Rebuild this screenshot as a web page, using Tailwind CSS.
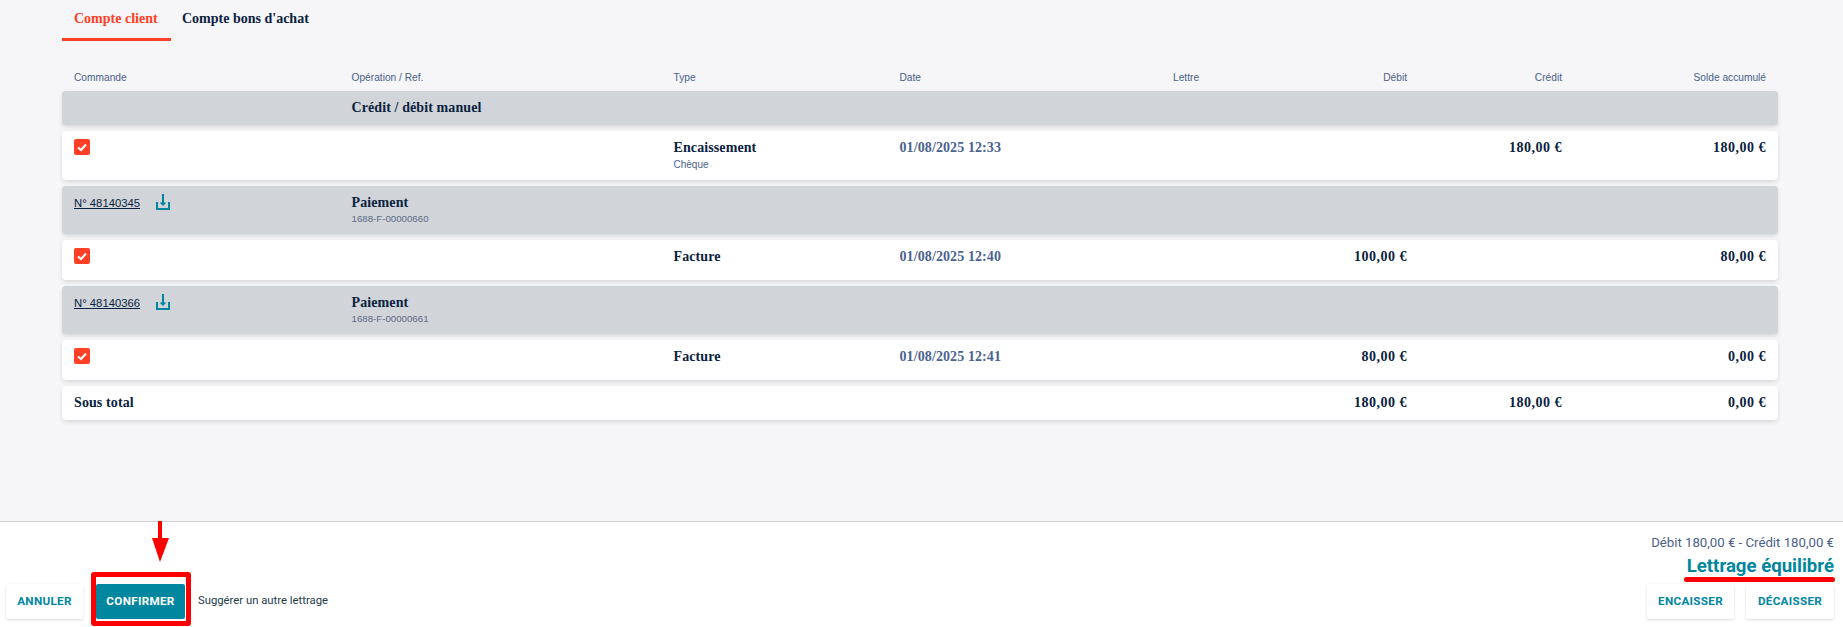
<!DOCTYPE html>
<html lang="fr">
<head>
    <meta charset="UTF-8">
    <title>Lettrage</title>
    <script src="https://cdn.jsdelivr.net/npm/@tailwindcss/browser@4"></script>
</head>
<body class="relative h-[627px] w-[1843px] overflow-hidden bg-[#f6f5f8] font-['Roboto',sans-serif] text-[#0a2240]">
    <div class="flex h-[627px] flex-col">
        <main class="flex-1 pr-[65px] pl-[62px]">
            <!-- onglets -->
            <nav class="flex h-[41px] font-['Liberation_Serif',serif] text-[14px] font-bold">
                <div class="h-[41px] w-[109px] border-b-[3px] border-[#ff4026] pt-[8px] pl-[12px] text-[#ff4026]">Compte client</div>
                <div class="pt-[8px] pl-[11px]">Compte bons d'achat</div>
            </nav>

            <!-- entetes -->
            <div class="grid h-[50px] grid-cols-[277.5px_322px_226px_273.5px_117px_117px_155px_204px] items-end px-[12px] pb-[6px] font-['Liberation_Sans',sans-serif] text-[10.2px] leading-[14px] text-[#4a5f8a]">
                <div>Commande</div>
                <div>Opération / Ref.</div>
                <div>Type</div>
                <div>Date</div>
                <div>Lettre</div>
                <div class="text-right">Débit</div>
                <div class="text-right">Crédit</div>
                <div class="text-right">Solde accumulé</div>
            </div>

            <div class="flex flex-col gap-[6px] font-['Liberation_Serif',serif] text-[14px] font-bold leading-[18px] tracking-[0.1px]">
                <!-- credit / debit manuel -->
                <div class="grid h-[34px] grid-cols-[277.5px_322px_226px_273.5px_117px_117px_155px_204px] items-center rounded-[4px] bg-[#d1d5d9] px-[12px] shadow-[0_2px_4px_rgba(0,0,0,0.12)]">
                    <div></div>
                    <div class="col-span-7">Crédit / débit manuel</div>
                </div>
                <div class="grid h-[49px] grid-cols-[277.5px_322px_226px_273.5px_117px_117px_155px_204px] rounded-[4px] bg-white px-[12px] pt-[8px] shadow-[0_2px_4px_rgba(0,0,0,0.12)]">
                    <div>
                        <div class="flex h-[16px] w-[16px] items-center justify-center rounded-[2px] bg-[#ff4026]">
                            <svg width="12" height="12" viewBox="0 0 12 12" fill="none" stroke="white" stroke-width="2"><path d="M2 6.5 L5 9 L10 3.5"/></svg>
                        </div>
                    </div>
                    <div></div>
                    <div>
                        <div>Encaissement</div>
                        <div class="mt-[1px] font-['Liberation_Sans',sans-serif] text-[10px] font-normal leading-[13px] tracking-normal text-[#4a5f8a]">Chèque</div>
                    </div>
                    <div class="text-[#4a6390]">01/08/2025 12:33</div>
                    <div></div>
                    <div></div>
                    <div class="text-right tracking-[0.5px]">180,00 €</div>
                    <div class="text-right tracking-[0.5px]">180,00 €</div>
                </div>

                <!-- N° 48140345 -->
                <div class="grid h-[48px] grid-cols-[277.5px_322px_226px_273.5px_117px_117px_155px_204px] rounded-[4px] bg-[#d1d5d9] px-[12px] pt-[8px] shadow-[0_2px_4px_rgba(0,0,0,0.12)]">
                    <div class="flex items-start gap-[16px]">
                        <span class="font-['Liberation_Sans',sans-serif] text-[11.3px] font-normal tracking-normal underline">N° 48140345</span>
                        <svg class="-mt-[1px]" width="14" height="18" viewBox="0 0 14 18" fill="none" stroke="#00869f" stroke-width="2"><path d="M1 9v7h12V9M7 1v10"/><path d="M4.5 9.5 L7 12 L9.5 9.5" stroke-width="1.5"/></svg>
                    </div>
                    <div class="col-span-7">
                        <div>Paiement</div>
                        <div class="font-['Liberation_Sans',sans-serif] text-[9.7px] font-normal leading-[13px] tracking-normal text-[#5c6b85]">1688-F-00000660</div>
                    </div>
                </div>
                <div class="grid h-[40px] grid-cols-[277.5px_322px_226px_273.5px_117px_117px_155px_204px] rounded-[4px] bg-white px-[12px] pt-[8px] shadow-[0_2px_4px_rgba(0,0,0,0.12)]">
                    <div>
                        <div class="flex h-[16px] w-[16px] items-center justify-center rounded-[2px] bg-[#ff4026]">
                            <svg width="12" height="12" viewBox="0 0 12 12" fill="none" stroke="white" stroke-width="2"><path d="M2 6.5 L5 9 L10 3.5"/></svg>
                        </div>
                    </div>
                    <div></div>
                    <div>Facture</div>
                    <div class="text-[#4a6390]">01/08/2025 12:40</div>
                    <div></div>
                    <div class="text-right tracking-[0.5px]">100,00 €</div>
                    <div></div>
                    <div class="text-right tracking-[0.5px]">80,00 €</div>
                </div>

                <!-- N° 48140366 -->
                <div class="grid h-[48px] grid-cols-[277.5px_322px_226px_273.5px_117px_117px_155px_204px] rounded-[4px] bg-[#d1d5d9] px-[12px] pt-[8px] shadow-[0_2px_4px_rgba(0,0,0,0.12)]">
                    <div class="flex items-start gap-[16px]">
                        <span class="font-['Liberation_Sans',sans-serif] text-[11.3px] font-normal tracking-normal underline">N° 48140366</span>
                        <svg class="-mt-[1px]" width="14" height="18" viewBox="0 0 14 18" fill="none" stroke="#00869f" stroke-width="2"><path d="M1 9v7h12V9M7 1v10"/><path d="M4.5 9.5 L7 12 L9.5 9.5" stroke-width="1.5"/></svg>
                    </div>
                    <div class="col-span-7">
                        <div>Paiement</div>
                        <div class="font-['Liberation_Sans',sans-serif] text-[9.7px] font-normal leading-[13px] tracking-normal text-[#5c6b85]">1688-F-00000661</div>
                    </div>
                </div>
                <div class="grid h-[40px] grid-cols-[277.5px_322px_226px_273.5px_117px_117px_155px_204px] rounded-[4px] bg-white px-[12px] pt-[8px] shadow-[0_2px_4px_rgba(0,0,0,0.12)]">
                    <div>
                        <div class="flex h-[16px] w-[16px] items-center justify-center rounded-[2px] bg-[#ff4026]">
                            <svg width="12" height="12" viewBox="0 0 12 12" fill="none" stroke="white" stroke-width="2"><path d="M2 6.5 L5 9 L10 3.5"/></svg>
                        </div>
                    </div>
                    <div></div>
                    <div>Facture</div>
                    <div class="text-[#4a6390]">01/08/2025 12:41</div>
                    <div></div>
                    <div class="text-right tracking-[0.5px]">80,00 €</div>
                    <div></div>
                    <div class="text-right tracking-[0.5px]">0,00 €</div>
                </div>

                <!-- sous total -->
                <div class="grid h-[34px] grid-cols-[277.5px_322px_226px_273.5px_117px_117px_155px_204px] items-center rounded-[4px] bg-white px-[12px] shadow-[0_2px_4px_rgba(0,0,0,0.12)]">
                    <div>Sous total</div>
                    <div></div>
                    <div></div>
                    <div></div>
                    <div></div>
                    <div class="text-right tracking-[0.5px]">180,00 €</div>
                    <div class="text-right tracking-[0.5px]">180,00 €</div>
                    <div class="text-right tracking-[0.5px]">0,00 €</div>
                </div>
            </div>
        </main>

        <!-- pied de page -->
        <footer class="flex h-[106px] items-end justify-between border-t border-[#cfcfd3] bg-white pr-[9px] pb-[8px] pl-[6px]">
            <div class="flex items-center">
                <button class="h-[35px] w-[77px] rounded-[2px] bg-white text-[11.7px] font-bold tracking-[0.3px] text-[#00869f] shadow-[0_1px_3px_rgba(0,0,0,0.14)]">ANNULER</button>
                <button class="ml-[13px] h-[35px] w-[89px] rounded-[2px] bg-[#00869f] text-[11.7px] font-bold tracking-[0.3px] text-white">CONFIRMER</button>
                <span class="ml-[13px] text-[11.3px] text-[#1d3c4a]">Suggérer un autre lettrage</span>
            </div>
            <div class="flex flex-col items-end">
                <div class="text-[13.2px] leading-[16px] text-[#4a5f8a]">Débit 180,00 € - Crédit 180,00 €</div>
                <div class="mt-[3px] mb-[6px] text-[18.6px] leading-[24px] font-bold text-[#00869f]">Lettrage équilibré</div>
                <div class="flex gap-[12px]">
                    <button class="h-[35px] w-[87px] rounded-[2px] bg-white text-[11.7px] font-bold tracking-[0.3px] text-[#00869f] shadow-[0_1px_3px_rgba(0,0,0,0.14)]">ENCAISSER</button>
                    <button class="h-[35px] w-[88px] rounded-[2px] bg-white text-[11.7px] font-bold tracking-[0.3px] text-[#00869f] shadow-[0_1px_3px_rgba(0,0,0,0.14)]">DÉCAISSER</button>
                </div>
            </div>
        </footer>
    </div>

    <!-- annotations rouges -->
    <svg class="absolute top-[521px] left-[150px]" width="20" height="42" viewBox="0 0 20 42"><path d="M8 0h4v17h7L10 41 2 17h6z" fill="#ff0000"/></svg>
    <div class="absolute top-[572px] left-[91px] h-[54px] w-[100px] rounded-[3px] border-[5px] border-[#ff0000]"></div>
    <div class="absolute top-[577px] left-[1684px] h-[5px] w-[151px] rounded-full bg-[#ff0000]"></div>
</body>
</html>
